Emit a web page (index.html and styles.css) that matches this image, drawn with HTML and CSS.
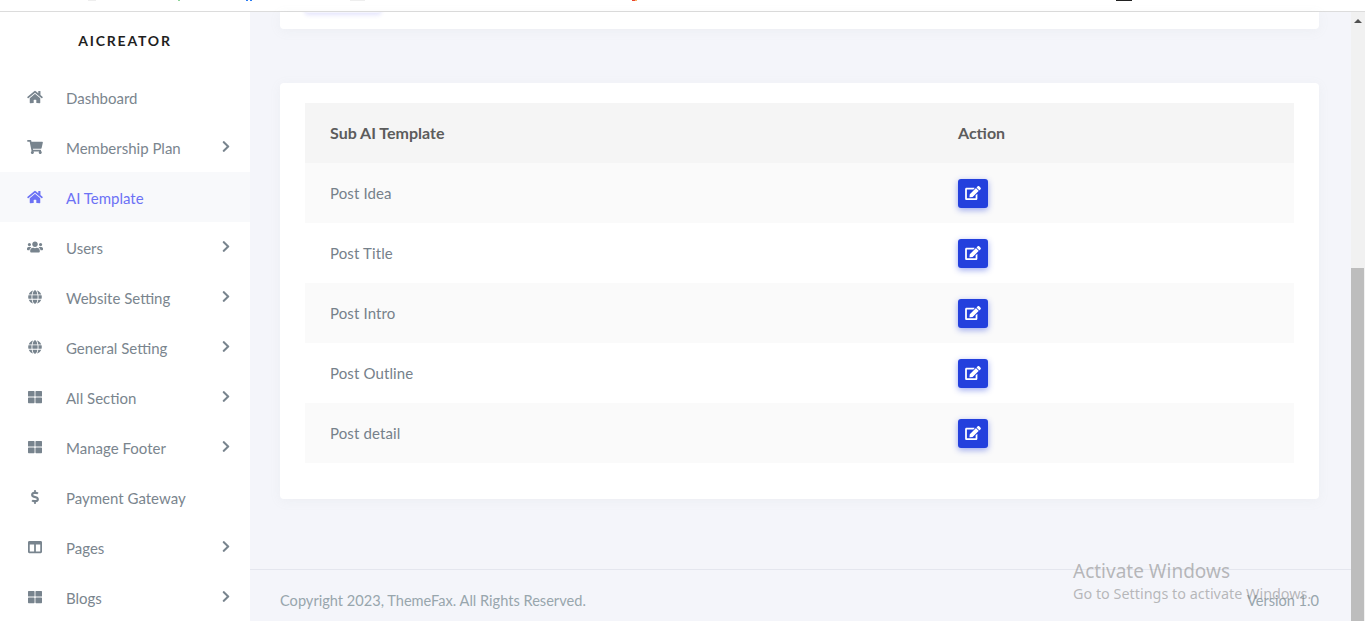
FILE: index.html
```html
<!DOCTYPE html>
<html lang="en">
<head>
<meta charset="utf-8">
<title>AI Template</title>
<link rel="stylesheet" href="styles.css">
</head>
<body>
<svg class="defs" width="0" height="0" aria-hidden="true">
<symbol id="i-home" viewBox="0 0 576 512"><path d="M280.37 148.26L96 300.11V464a16 16 0 0 0 16 16l112.06-.29a16 16 0 0 0 15.92-16V368a16 16 0 0 1 16-16h64a16 16 0 0 1 16 16v95.64a16 16 0 0 0 16 16.05L464 480a16 16 0 0 0 16-16V300L295.67 148.26a12.19 12.19 0 0 0-15.3 0zM571.6 251.47L488 182.56V44.05a12 12 0 0 0-12-12h-56a12 12 0 0 0-12 12v72.61L318.47 43a48 48 0 0 0-61 0L4.34 251.47a12 12 0 0 0-1.6 16.9l25.5 31A12 12 0 0 0 45.15 301l235.22-193.74a12.19 12.19 0 0 1 15.3 0L530.9 301a12 12 0 0 0 16.9-1.6l25.5-31a12 12 0 0 0-1.7-16.93z"/></symbol>
<symbol id="i-cart" viewBox="0 0 576 512"><path d="M528.12 301.319l47.273-208C578.806 78.301 567.391 64 551.99 64H159.208l-9.166-44.81C147.758 8.021 137.93 0 126.529 0H24C10.745 0 0 10.745 0 24v16c0 13.255 10.745 24 24 24h69.883l70.248 343.435C147.325 417.1 136 435.222 136 456c0 30.928 25.072 56 56 56s56-25.072 56-56c0-15.674-6.447-29.835-16.824-40h209.647C430.447 426.165 424 440.326 424 456c0 30.928 25.072 56 56 56s56-25.072 56-56c0-22.172-12.888-41.332-31.579-50.405l5.517-24.276c3.413-15.018-8.002-29.319-23.403-29.319H218.117l-6.545-32h293.145c11.206 0 20.92-7.754 23.403-18.681z"/></symbol>
<symbol id="i-users" viewBox="0 0 640 512"><path d="M96 224c35.3 0 64-28.7 64-64s-28.7-64-64-64-64 28.7-64 64 28.7 64 64 64zm448 0c35.3 0 64-28.7 64-64s-28.7-64-64-64-64 28.7-64 64 28.7 64 64 64zm32 32h-64c-17.6 0-33.5 7.1-45.1 18.6 40.3 22.1 68.9 62 75.1 109.4h66c17.7 0 32-14.3 32-32v-32c0-35.3-28.7-64-64-64zm-256 0c61.9 0 112-50.1 112-112S381.9 32 320 32 208 82.1 208 144s50.1 112 112 112zm76.8 32h-8.3c-20.8 10-43.9 16-68.5 16s-47.6-6-68.5-16h-8.3C179.6 288 128 339.6 128 403.2V432c0 26.5 21.5 48 48 48h288c26.5 0 48-21.5 48-48v-28.8c0-63.6-51.6-115.2-115.2-115.2zm-223.7-13.4C161.5 263.1 145.6 256 128 256H64c-35.3 0-64 28.7-64 64v32c0 17.7 14.3 32 32 32h65.9c6.3-47.4 34.9-87.3 75.2-109.4z"/></symbol>
<symbol id="i-globe" viewBox="0 0 496 512"><path d="M336.5 160C322 70.7 287.8 8 248 8s-74 62.7-88.5 152h177zM152 256c0 22.2 1.2 43.5 3.3 64h185.3c2.1-20.5 3.3-41.8 3.3-64s-1.2-43.5-3.3-64H155.3c-2.1 20.5-3.3 41.8-3.3 64zm324.7-96c-28.6-67.9-86.5-120.4-158-141.6 24.4 33.8 41.2 84.7 50 141.6h108zM177.2 18.4C105.8 39.6 47.8 92.1 19.3 160h108c8.7-56.9 25.5-107.8 49.9-141.6zM487.4 192H372.7c2.1 21 3.3 42.5 3.3 64s-1.2 43-3.3 64h114.6c5.5-20.5 8.6-41.8 8.6-64s-3.1-43.5-8.5-64zM120 256c0-21.5 1.2-43 3.3-64H8.6C3.2 212.5 0 233.8 0 256s3.2 43.5 8.6 64h114.6c-2-21-3.2-42.5-3.2-64zm39.5 96c14.5 89.3 48.7 152 88.5 152s74-62.7 88.5-152h-177zm159.3 141.6c71.4-21.2 129.4-73.7 158-141.6h-108c-8.8 56.9-25.6 107.8-50 141.6zM19.3 352c28.6 67.9 86.5 120.4 158 141.6-24.4-33.8-41.2-84.7-50-141.6h-108z"/></symbol>
<symbol id="i-th" viewBox="0 0 512 512"><path d="M296 32h192c13.255 0 24 10.745 24 24v160c0 13.255-10.745 24-24 24H296c-13.255 0-24-10.745-24-24V56c0-13.255 10.745-24 24-24zm-80 0H24C10.745 32 0 42.745 0 56v160c0 13.255 10.745 24 24 24h192c13.255 0 24-10.745 24-24V56c0-13.255-10.745-24-24-24zM0 296v160c0 13.255 10.745 24 24 24h192c13.255 0 24-10.745 24-24V296c0-13.255-10.745-24-24-24H24c-13.255 0-24 10.745-24 24zm296 184h192c13.255 0 24-10.745 24-24V296c0-13.255-10.745-24-24-24H296c-13.255 0-24 10.745-24 24v160c0 13.255 10.745 24 24 24z"/></symbol>
<symbol id="i-dollar" viewBox="0 0 288 512"><path d="M209.2 233.4l-108-31.6C88.7 198.2 80 186.5 80 173.5c0-16.3 13.2-29.5 29.5-29.5h66.3c12.2 0 24.2 3.7 34.2 10.5 6.1 4.1 14.3 3.1 19.5-2l34.8-34c7.1-6.9 6.1-18.4-1.8-24.5C238 74.8 207.4 64.1 176 64V16c0-8.8-7.2-16-16-16h-32c-8.8 0-16 7.2-16 16v48h-2.5C45.8 64-5.4 118.7.5 183.6c4.2 46.1 39.4 83.6 83.8 96.6l102.5 30c12.5 3.7 21.2 15.3 21.2 28.3 0 16.3-13.2 29.5-29.5 29.5h-66.3C100 368 88 364.3 78 357.5c-6.1-4.1-14.3-3.1-19.5 2l-34.8 34c-7.1 6.9-6.1 18.4 1.8 24.5 24.5 19.2 55.1 29.9 86.5 30v48c0 8.8 7.2 16 16 16h32c8.8 0 16-7.2 16-16v-48.2c46.6-.9 90.3-28.6 105.7-72.7 21.5-61.6-14.6-124.8-72.5-141.7z"/></symbol>
<symbol id="i-columns" viewBox="0 0 512 512"><path d="M464 32H48C21.49 32 0 53.49 0 80v352c0 26.51 21.49 48 48 48h416c26.51 0 48-21.49 48-48V80c0-26.51-21.49-48-48-48zM224 416H64V160h160v256zm224 0H288V160h160v256z"/></symbol>
<symbol id="i-chevron" viewBox="0 0 320 512"><path d="M285.476 272.971L91.132 467.314c-9.373 9.373-24.569 9.373-33.941 0l-22.667-22.667c-9.357-9.357-9.375-24.522-.04-33.901L188.505 256 34.484 101.255c-9.335-9.379-9.317-24.544.04-33.901l22.667-22.667c9.373-9.373 24.569-9.373 33.941 0L285.475 239.03c9.373 9.372 9.373 24.568.001 33.941z"/></symbol>
<symbol id="i-edit" viewBox="0 0 576 512"><path d="M402.6 83.2l90.2 90.2c3.8 3.8 3.8 10 0 13.8L274.4 405.6l-92.8 10.3c-12.4 1.4-22.9-9.1-21.5-21.5l10.3-92.8L388.8 83.2c3.8-3.8 10-3.8 13.8 0zm162-22.9l-48.8-48.8c-15.2-15.2-39.9-15.2-55.2 0l-35.4 35.4c-3.8 3.8-3.8 10 0 13.8l90.2 90.2c3.8 3.8 10 3.8 13.8 0l35.4-35.4c15.2-15.3 15.2-40 0-55.2zM384 346.2V448H64V128h229.8c3.2 0 6.2-1.3 8.5-3.5l40-40c7.6-7.6 2.2-20.5-8.5-20.5H48C21.5 64 0 85.5 0 112v352c0 26.5 21.5 48 48 48h352c26.5 0 48-21.5 48-48V306.2c0-10.7-12.9-16-20.5-8.5l-40 40c-2.2 2.3-3.5 5.3-3.5 8.5z"/></symbol>
</svg>

<header class="topbar">
  <span class="sliver sliver-g"></span>
  <span class="sliver sliver-a"></span>
  <span class="sliver sliver-b"></span>
  <span class="sliver sliver-e"></span>
  <span class="sliver sliver-c"></span>
  <span class="sliver sliver-d"></span>
</header>

<div class="shell">
  <aside class="sidebar">
    <div class="brand">AICREATOR</div>
    <nav class="menu">
      <a class="item"><svg class="ico"><use href="#i-home"/></svg><span class="label">Dashboard</span></a>
      <a class="item"><svg class="ico"><use href="#i-cart"/></svg><span class="label">Membership Plan</span><svg class="chev"><use href="#i-chevron"/></svg></a>
      <a class="item active"><svg class="ico"><use href="#i-home"/></svg><span class="label">AI Template</span></a>
      <a class="item"><svg class="ico"><use href="#i-users"/></svg><span class="label">Users</span><svg class="chev"><use href="#i-chevron"/></svg></a>
      <a class="item"><svg class="ico"><use href="#i-globe"/></svg><span class="label">Website Setting</span><svg class="chev"><use href="#i-chevron"/></svg></a>
      <a class="item"><svg class="ico"><use href="#i-globe"/></svg><span class="label">General Setting</span><svg class="chev"><use href="#i-chevron"/></svg></a>
      <a class="item"><svg class="ico"><use href="#i-th"/></svg><span class="label">All Section</span><svg class="chev"><use href="#i-chevron"/></svg></a>
      <a class="item"><svg class="ico"><use href="#i-th"/></svg><span class="label">Manage Footer</span><svg class="chev"><use href="#i-chevron"/></svg></a>
      <a class="item"><svg class="ico"><use href="#i-dollar"/></svg><span class="label">Payment Gateway</span></a>
      <a class="item"><svg class="ico"><use href="#i-columns"/></svg><span class="label">Pages</span><svg class="chev"><use href="#i-chevron"/></svg></a>
      <a class="item"><svg class="ico"><use href="#i-th"/></svg><span class="label">Blogs</span><svg class="chev"><use href="#i-chevron"/></svg></a>
    </nav>
  </aside>

  <main class="main">
    <div class="content">
      <section class="card card-top"><span class="ghost-btn"></span></section>
      <section class="card card-table">
        <table class="table">
          <thead>
            <tr><th class="col-name">Sub AI Template</th><th>Action</th></tr>
          </thead>
          <tbody>
            <tr><td>Post Idea</td><td><a class="edit"><svg class="edit-ico"><use href="#i-edit"/></svg></a></td></tr>
            <tr><td>Post Title</td><td><a class="edit"><svg class="edit-ico"><use href="#i-edit"/></svg></a></td></tr>
            <tr><td>Post Intro</td><td><a class="edit"><svg class="edit-ico"><use href="#i-edit"/></svg></a></td></tr>
            <tr><td>Post Outline</td><td><a class="edit"><svg class="edit-ico"><use href="#i-edit"/></svg></a></td></tr>
            <tr><td>Post detail</td><td><a class="edit"><svg class="edit-ico"><use href="#i-edit"/></svg></a></td></tr>
          </tbody>
        </table>
      </section>
    </div>
    <footer class="footer">
      <span>Copyright 2023, ThemeFax. All Rights Reserved.</span>
      <span>Version 1.0</span>
    </footer>
    <div class="watermark">
      <div class="wm-title">Activate Windows</div>
      <div class="wm-sub">Go to Settings to activate Windows.</div>
    </div>
  </main>

  <div class="scrollbar">
    <span class="arrow"></span>
    <div class="thumb"></div>
  </div>
</div>
</body>
</html>
```
FILE: styles.css
```css
* { box-sizing: border-box; }
html, body { margin: 0; height: 621px; overflow: hidden; }
body {
  font-family: "Lato", "Noto Sans", sans-serif;
  font-size: 15px;
  color: #6c757d;
  background: #f4f5fa;
}
.defs { position: absolute; }

.topbar {
  position: relative;
  height: 12px;
  background: #fff;
  border-bottom: 1px solid #dcdcdc;
}
.sliver { position: absolute; top: 0; height: 1px; }
.sliver-g { left: 88px; width: 8px; background: #eeeeee; }
.sliver-a { left: 178px; width: 2px; background: #8fd69a; }
.sliver-b { left: 246px; width: 6px; background: linear-gradient(90deg, #2b7cf3 0 40%, #fff 40% 60%, #2b7cf3 60%); }
.sliver-e { left: 350px; width: 15px; background: #eeeeee; }
.sliver-c { left: 632px; width: 5px; background: linear-gradient(90deg, #e8432f 0 60%, #f7b267 60%); }
.sliver-d { left: 1116px; width: 16px; background: #222; }

.shell { display: flex; height: 609px; }

.sidebar { width: 250px; flex: none; background: #fff; }
.brand {
  height: 60px;
  padding-top: 20px;
  text-align: center;
  font-size: 14px;
  line-height: 18px;
  font-weight: 700;
  letter-spacing: 1.8px;
  color: #1f1f1f;
}
.menu { display: flex; flex-direction: column; }
.item {
  display: flex;
  align-items: center;
  height: 50px;
  padding: 0 20px 0 27px;
  color: #7a858e;
}
.item.active { background: #f8f9fb; color: #6c72f5; }
.ico { width: 16px; height: 14px; flex: none; margin-right: 23px; fill: #78848e; }
.item.active .ico { fill: #6c72f5; }
.label { flex: 1; position: relative; top: 1px; }
.chev { width: 8px; height: 13px; flex: none; fill: #78848e; position: relative; top: -1px; }

.main { flex: 1; min-width: 0; display: flex; flex-direction: column; position: relative; }
.content { flex: 1; padding: 0 32px 0 30px; }
.card { background: #fff; border-radius: 4px; box-shadow: 0 2px 12px rgba(154, 161, 171, .08); }
.card-top { height: 17px; border-radius: 0 0 4px 4px; margin-bottom: 54px; position: relative; overflow: hidden; }
.ghost-btn {
  position: absolute; left: 25px; top: -9px; width: 76px; height: 10px;
  background: #f4f4fe; border-radius: 3px; box-shadow: 0 2px 4px rgba(90, 90, 240, .16);
}
.card-table { height: 416px; padding: 20px 25px; }

.table { width: 100%; border-collapse: collapse; table-layout: fixed; }
.table th, .table td { height: 60px; padding: 0 25px; text-align: left; vertical-align: middle; }
.table th { background: #f5f5f5; color: #5c5c5c; font-weight: 700; font-size: 16px; padding-bottom: 2px; }
.col-name { width: 628px; }
.table tbody tr:nth-child(odd) { background: #fafafa; }
.table td { color: #76818b; letter-spacing: .12px; }

.edit {
  display: flex; align-items: center; justify-content: center;
  width: 30px; height: 29px;
  background: #2340dd; border-radius: 3px;
  box-shadow: 0 2px 6px rgba(35, 64, 221, .45);
}
.edit-ico { width: 16px; height: 14px; fill: #fff; }

.footer {
  height: 52px;
  padding: 21px 32px 0 30px;
  display: flex; justify-content: space-between;
  border-top: 1px solid #e4e6ee;
  color: #98a6ad;
  font-size: 14.6px;
  line-height: 20px;
}

.watermark {
  position: absolute; left: 823px; top: 546px;
  font-family: "Noto Sans", sans-serif;
  color: rgba(120, 120, 120, .5);
  white-space: nowrap;
}
.wm-title { font-size: 19px; line-height: 26px; }
.wm-sub { font-size: 14.4px; line-height: 20px; }

.scrollbar { width: 14px; flex: none; background: #f1f1f1; position: relative; }
.arrow {
  position: absolute; left: 3px; top: 7px;
  border-left: 4px solid transparent; border-right: 4px solid transparent;
  border-bottom: 4px solid #505050;
}
.thumb { position: absolute; left: 0; top: 256px; bottom: 0; width: 13px; background: #bdbdbd; }
```
